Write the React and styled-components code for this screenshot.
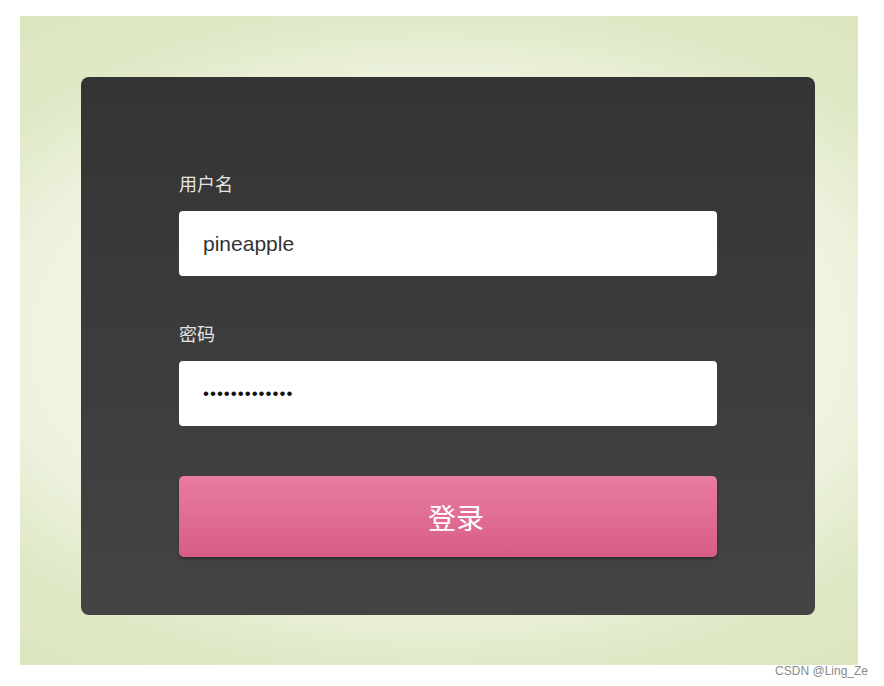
import styled, { createGlobalStyle } from "styled-components";

const GlobalStyle = createGlobalStyle`
  html, body {
    margin: 0;
    padding: 0;
    background: #ffffff;
  }
  body {
    font-family: "Liberation Sans", "Noto Sans CJK SC", sans-serif;
  }
`;

const Page = styled.div`
  width: 884px;
  height: 686px;
  padding: 16px 26px 0 20px;
  box-sizing: border-box;
  position: relative;
`;

const Backdrop = styled.div`
  width: 838px;
  height: 649px;
  padding: 61px 43px 50px 61px;
  box-sizing: border-box;
  background: radial-gradient(
    ellipse 700px 420px at 50% 50%,
    #f3f7ea 0%,
    #eef3e0 60%,
    #e0e9c7 78%,
    #dbe5bd 100%
  );
`;

const Card = styled.form`
  width: 734px;
  height: 538px;
  box-sizing: border-box;
  padding: 95px 98px 0 98px;
  border-radius: 8px;
  background: linear-gradient(to bottom, #343434 0%, #444444 100%);
  display: flex;
  flex-direction: column;
`;

const Field = styled.div`
  display: flex;
  flex-direction: column;
  gap: 17px;
  margin-bottom: ${(p) => p.$gap || 0}px;
`;

const Label = styled.label`
  color: #e4e4e4;
  font-size: 18px;
  line-height: 22px;
  font-family: "Noto Sans CJK SC", sans-serif;
`;

const Input = styled.input`
  width: 538px;
  height: 65px;
  box-sizing: border-box;
  border: none;
  border-radius: 4px;
  background: #ffffff;
  padding: 0 24px;
  font-family: "Liberation Sans", "Noto Sans CJK SC", sans-serif;
  font-size: 21px;
  color: #333333;
  outline: none;

  &[type="password"] {
    font-size: 17px;
    letter-spacing: 1px;
    color: #111;
  }
`;

const Button = styled.button`
  margin-top: 50px;
  width: 538px;
  height: 81px;
  padding: 0 0 0 16px;
  border: none;
  border-radius: 5px;
  background: linear-gradient(to bottom, #e97c9f 0%, #d75d87 100%);
  box-shadow: 0 2px 3px rgba(0, 0, 0, 0.3);
  color: #ffffff;
  font-size: 28px;
  font-family: "Noto Sans CJK SC", sans-serif;
  cursor: pointer;
`;

const Watermark = styled.span`
  position: absolute;
  right: 16px;
  bottom: 8px;
  font-family: "Liberation Sans", sans-serif;
  font-size: 12px;
  color: #8a8a8a;
`;

export default function App() {
  return (
    <>
      <GlobalStyle />
      <Page>
        <Backdrop>
          <Card onSubmit={(e) => e.preventDefault()}>
            <Field $gap={46}>
              <Label>用户名</Label>
              <Input type="text" defaultValue="pineapple" />
            </Field>
            <Field>
              <Label>密码</Label>
              <Input type="password" defaultValue="pineapple1234" />
            </Field>
            <Button type="submit">登录</Button>
          </Card>
        </Backdrop>
        <Watermark>CSDN @Ling_Ze</Watermark>
      </Page>
    </>
  );
}
